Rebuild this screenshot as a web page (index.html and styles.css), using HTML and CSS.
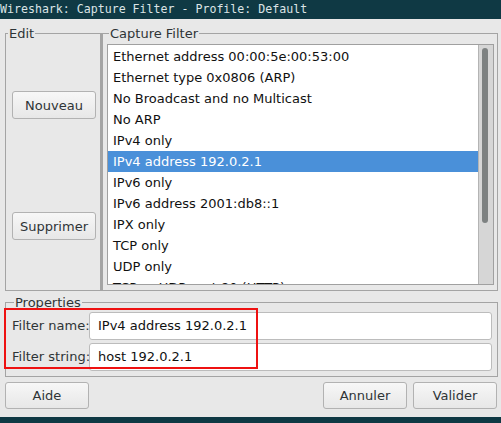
FILE: index.html
```html
<!DOCTYPE html>
<html lang="fr">
<head>
<meta charset="utf-8">
<title>Wireshark: Capture Filter</title>
<link rel="stylesheet" href="styles.css">
</head>
<body>
<div class="window">
  <div class="titlebar">Wireshark: Capture Filter - Profile: Default</div>
  <div class="content">
    <div class="top">
      <fieldset class="frame edit">
        <legend>Edit</legend>
        <div class="edit-buttons">
          <button class="btn">Nouveau</button>
          <button class="btn">Supprimer</button>
        </div>
      </fieldset>
      <fieldset class="frame capture">
        <legend>Capture Filter</legend>
        <div class="listbox">
          <ul class="list">
            <li>Ethernet address 00:00:5e:00:53:00</li>
            <li>Ethernet type 0x0806 (ARP)</li>
            <li>No Broadcast and no Multicast</li>
            <li>No ARP</li>
            <li>IPv4 only</li>
            <li class="selected">IPv4 address 192.0.2.1</li>
            <li>IPv6 only</li>
            <li>IPv6 address 2001:db8::1</li>
            <li>IPX only</li>
            <li>TCP only</li>
            <li>UDP only</li>
            <li>TCP or UDP port 80 (HTTP)</li>
          </ul>
          <div class="scrollbar"><div class="thumb"></div></div>
        </div>
      </fieldset>
    </div>
    <fieldset class="frame props">
      <legend>Properties</legend>
      <div class="props-body">
        <div class="props-grid">
          <label class="lbl">Filter name:</label>
          <div class="input">IPv4 address 192.0.2.1</div>
          <label class="lbl">Filter string:</label>
          <div class="input">host 192.0.2.1</div>
        </div>
        <div class="annot"></div>
      </div>
    </fieldset>
    <div class="actions">
      <button class="btn">Aide</button>
      <button class="btn push">Annuler</button>
      <button class="btn">Valider</button>
    </div>
  </div>
  <div class="bottombar"></div>
</div>
</body>
</html>
```
FILE: styles.css
```css
html, body {
  margin: 0;
  padding: 0;
}
body {
  width: 501px;
  height: 423px;
  overflow: hidden;
  background: #e8e8e8;
  font-family: "DejaVu Sans", sans-serif;
  font-size: 13px;
  color: #2e3436;
}
.window {
  display: flex;
  flex-direction: column;
  height: 423px;
}
.titlebar {
  height: 19px;
  line-height: 19px;
  background: #0f3944;
  color: #dce4e6;
  font-family: "DejaVu Sans Mono", monospace;
  font-size: 11.6px;
  white-space: nowrap;
  padding-left: 0;
}
.content {
  flex: 1;
  display: flex;
  flex-direction: column;
  padding: 7px 3px 0 5px;
}
.top {
  display: flex;
  height: 265px;
}
.frame {
  margin: 0;
  padding: 0;
  min-width: 0;
  border: 1px solid #a4a4a4;
  box-sizing: border-box;
}
.frame legend {
  padding: 0 1px;
  margin-left: 2px;
  line-height: 15px;
  color: #2e3436;
}
.edit {
  width: 97px;
  border-right-width: 2px;
}
.edit-buttons {
  display: flex;
  flex-direction: column;
  gap: 93px;
  padding: 50px 0 0 6px;
}
.btn {
  width: 84px;
  height: 28px;
  box-sizing: border-box;
  border: 1px solid #b2b2b2;
  border-radius: 3px;
  background: linear-gradient(#f7f7f7, #e7e7e7);
  font-family: "DejaVu Sans", sans-serif;
  font-size: 13px;
  color: #2e3436;
  padding: 0;
  margin: 0;
}
.capture {
  flex: 1;
  padding: 3px 3px 5px 4px;
}
.listbox {
  display: flex;
  height: 241px;
  box-sizing: border-box;
  border: 1px solid #a0a0a0;
  background: #ffffff;
}
.list {
  flex: 1;
  margin: 0;
  padding: 1px 0 0 0;
  list-style: none;
  overflow: hidden;
  color: #111111;
}
.list li {
  height: 21px;
  line-height: 21px;
  padding-left: 5px;
  white-space: nowrap;
}
.list li.selected {
  background: #4a90d9;
  color: #ffffff;
}
.scrollbar {
  width: 14px;
  background: #d6d6d6;
  border-left: 1px solid #b4b4b4;
  padding-top: 3px;
}
.thumb {
  width: 6px;
  height: 175px;
  margin-left: 3px;
  border-radius: 3px;
  background: #7d8181;
}
.props {
  margin-top: 4px;
  padding: 2px 5px 5px 6px;
}
.props-body {
  position: relative;
}
.props-grid {
  display: grid;
  grid-template-columns: 71px 1fr;
  column-gap: 6px;
  row-gap: 3px;
}
.lbl {
  line-height: 28px;
  white-space: nowrap;
}
.input {
  height: 28px;
  line-height: 26px;
  box-sizing: border-box;
  border: 1px solid #bcbcbc;
  border-radius: 3px;
  background: #ffffff;
  padding-left: 8px;
  color: #111111;
}
.annot {
  position: absolute;
  left: -8px;
  top: -4px;
  width: 254px;
  height: 61px;
  box-sizing: border-box;
  border: 2px solid #ee1111;
}
.actions {
  display: flex;
  gap: 6px;
  margin-top: 5px;
  padding-right: 1px;
}
.actions .btn {
  height: 27px;
}
.push {
  margin-left: auto;
}
.bottombar {
  height: 6px;
  background: #0f3944;
}
```
